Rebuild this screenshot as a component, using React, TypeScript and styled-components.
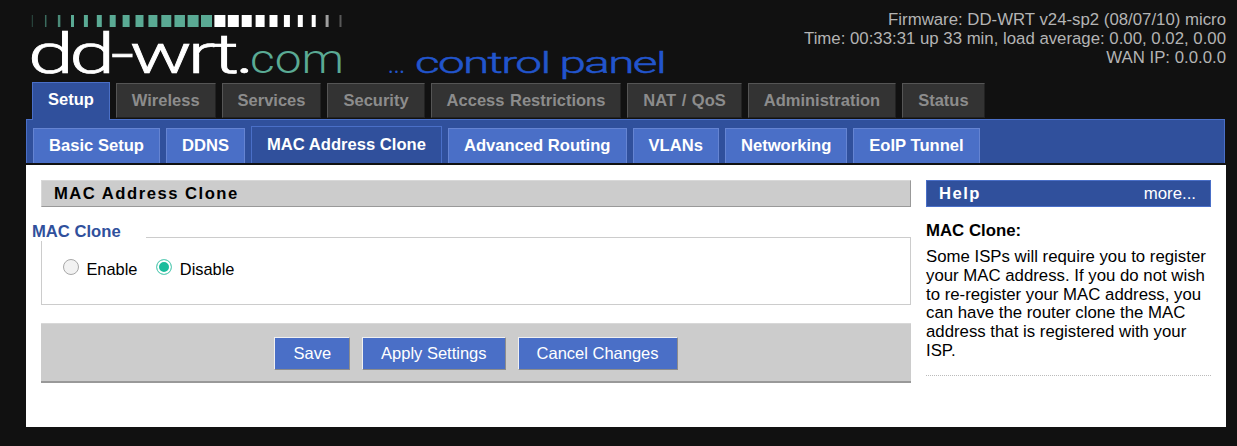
import { styled, createGlobalStyle } from "styled-components"

const GlobalStyle = createGlobalStyle`
  html, body {
    margin:0;
    padding:0;
    background:#111111;
    font-family:"Liberation Sans", Arial, sans-serif;
    font-size:16.4px;
  }
`
const Page = styled.div`
  width:1237px;
  height:446px;
  box-sizing:border-box;
  padding-right:11px;
  overflow:hidden;
`
const Header = styled.header`
  height:82px;
  display:flex;
  justify-content:space-between;
`
const LogoSvg = styled.svg`
  display:block;
  flex:none;
  width:680px;
  height:92px;
`
const Firmware = styled.div`
  padding-top:10px;
  text-align:right;
  font-size:16.8px;
  line-height:19px;
  color:#b4b4b4;
`
const Tabs = styled.nav`
  position:relative;
  display:flex;
  align-items:flex-start;
  gap:6px;
  height:37px;
  padding-left:32px;
`
const Tab = styled.div<{ $active?: boolean }>`
  box-sizing:border-box;
  display:flex;
  align-items:center;
  padding:0 15px;
  font-size:16.5px;
  font-weight:bold;
  word-spacing:1px;
  border:1px solid;
  ${({ $active }) => $active ? `
    position:relative;
    z-index:1;
    height:38px;
    padding-bottom:5px;
    color:#ffffff;
    background:#30509c;
    border-color:#4a6fc7;
    border-bottom:none;
  ` : `
    margin-top:1px;
    height:35px;
    color:#8c8c8c;
    background:#333333;
    border-color:#555555 #222222 #222222 #555555;
  `}
`
const SubBar = styled.div`
  box-sizing:border-box;
  display:flex;
  align-items:flex-end;
  gap:6px;
  height:44px;
  margin-left:26px;
  margin-right:1px;
  padding:0 6px;
  background:#30509c;
  border:1px solid #4a6fc7;
  border-bottom:none;
`
const SubTab = styled.div<{ $active?: boolean }>`
  box-sizing:border-box;
  display:flex;
  align-items:center;
  padding:0 15px;
  color:#ffffff;
  font-size:16.6px;
  font-weight:bold;
  border:1px solid;
  border-bottom:none;
  height:${({ $active }) => ($active ? "37px" : "35px")};
  background:${({ $active }) => ($active ? "#30509c" : "#4a6fc7")};
  border-color:${({ $active }) => ($active ? "#4a6fc7" : "#6584d2")};
`
const Main = styled.main`
  box-sizing:border-box;
  display:flex;
  gap:15px;
  height:262px;
  margin:2px 0 0 26px;
  padding:15px 15px 0;
  background:#ffffff;
  color:#000000;
`
const LeftColumn = styled.section`
  width:870px;
`
const SectionTitle = styled.h2`
  box-sizing:border-box;
  height:27px;
  margin:0;
  padding:0 12px;
  line-height:26px;
  font-size:16.64px;
  letter-spacing:1.5px;
  background:#cccccc;
  border-top:1px solid #d8d8d8;
  border-left:1px solid #d8d8d8;
  border-right:1px solid #999999;
  border-bottom:1px solid #999999;
`
const Fieldset = styled.div`
  position:relative;
  box-sizing:border-box;
  height:68px;
  margin-top:30px;
  padding:0 21px;
  border:1px solid #cccccc;
`
const Legend = styled.span`
  position:absolute;
  top:-16px;
  left:-10px;
  padding-right:25px;
  line-height:19px;
  font-size:16.64px;
  font-weight:bold;
  color:#30509c;
  background:#ffffff;
`
const RadioRow = styled.div`
  display:flex;
  align-items:center;
  gap:19px;
  margin-top:22px;
`
const RadioLabel = styled.label`
  display:flex;
  align-items:center;
  gap:7.4px;
  line-height:18px;
`
const Radio = styled.input`
  appearance:none;
  box-sizing:border-box;
  width:16px;
  height:16px;
  margin:-4px 0 0;
  border-radius:50%;
  border:1px solid #a8a8a8;
  background:#f2f2f2;
  &:checked {
    border-color:#6ad0bb;
    background:#1abc9c;
    box-shadow:inset 0 0 0 2px #ffffff;
  }
`
const ButtonBar = styled.div`
  box-sizing:border-box;
  display:flex;
  justify-content:center;
  align-items:center;
  gap:12px;
  height:60px;
  margin-top:18px;
  padding-top:1px;
  background:#cccccc;
  border-top:1px solid #d8d8d8;
  border-bottom:2px solid #999999;
`
const ActionButton = styled.button`
  box-sizing:border-box;
  height:33px;
  padding:0 18px;
  font-family:inherit;
  font-size:16.5px;
  color:#ffffff;
  background:#4a6fc7;
  border:1px solid;
  border-color:#f0f0f0 #8c8c8c #8c8c8c #f0f0f0;
`
const HelpColumn = styled.aside`
  width:285px;
`
const HelpTitle = styled.div`
  box-sizing:border-box;
  display:flex;
  justify-content:space-between;
  align-items:center;
  height:27px;
  padding:0 14px 0 12px;
  color:#ffffff;
  background:#30509c;
  border:1px solid #4a6fc7;
`
const HelpHeading = styled.span`
  font-size:16.64px;
  font-weight:bold;
  letter-spacing:1.5px;
`
const HelpMore = styled.span`
  font-size:16.8px;
`
const HelpBody = styled.div`
  margin-top:15px;
  padding-bottom:14px;
  border-bottom:1px dotted #bbbbbb;
`
const HelpTerm = styled.div`
  font-size:16.8px;
  font-weight:bold;
  line-height:18px;
  margin-top:1px;
`
const HelpText = styled.p`
  margin:8px 0 0;
  font-size:16.8px;
  line-height:18.8px;
`

const logoBars = [
  1, 1.5, 2.5, 3, 4, 5, 6, 7, 8, 9, 10, 10.5, 11, 11,
  11, 11, 10, 9, 8, 6, 5, 4, 3, 2,
]
const barOpacity = (i: number) => {
  if (i < 3) return 0.4 + i * 0.2
  if (i === 22) return 0.6
  if (i === 23) return 0.3
  return 1
}

const Logo = () => (
  <LogoSvg viewBox="0 0 680 92">
    {logoBars.map((w, i) => (
      <rect
        key={i}
        x={32.3 + i * 13.4 - w / 2}
        y={15}
        width={w}
        height={12}
        fill={i < 14 ? "#5aaa94" : "#ffffff"}
        opacity={barOpacity(i)}
      />
    ))}
    <text
      transform="translate(28 73) scale(1.47 1)"
      fontFamily="Roboto, sans-serif"
      fontSize={56}
      fontWeight={300}
      letterSpacing={-3}
      fill="#ffffff"
      stroke="#ffffff"
      strokeWidth={0.7}
    >
      dd-wrt.
    </text>
    <text
      x={250}
      y={73}
      fontFamily="Roboto, sans-serif"
      fontSize={40}
      fontWeight={300}
      textLength={94}
      lengthAdjust="spacingAndGlyphs"
      fill="#5aaa94"
    >
      com
    </text>
    <text
      x={388}
      y={73}
      fontFamily="Roboto, sans-serif"
      fontSize={24}
      textLength={17}
      lengthAdjust="spacingAndGlyphs"
      fill="#2255cc"
    >
      ...
    </text>
    <text
      x={415}
      y={73}
      fontFamily="Roboto, sans-serif"
      fontSize={30}
      fontWeight={300}
      letterSpacing={-1}
      textLength={250}
      lengthAdjust="spacingAndGlyphs"
      fill="#2255cc"
      stroke="#2255cc"
      strokeWidth={0.5}
    >
      control panel
    </text>
  </LogoSvg>
)

const mainTabs = ["Setup", "Wireless", "Services", "Security", "Access Restrictions", "NAT / QoS", "Administration", "Status"]
const subTabs = ["Basic Setup", "DDNS", "MAC Address Clone", "Advanced Routing", "VLANs", "Networking", "EoIP Tunnel"]

const App: React.FC = () => {
  return (
    <Page>
      <GlobalStyle />
      <Header>
        <Logo />
        <Firmware>
          Firmware: DD-WRT v24-sp2 (08/07/10) micro<br />
          Time: 00:33:31 up 33 min, load average: 0.00, 0.02, 0.00<br />
          WAN IP: 0.0.0.0
        </Firmware>
      </Header>
      <Tabs>
        {mainTabs.map((t) => (
          <Tab key={t} $active={t === "Setup"}>{t}</Tab>
        ))}
      </Tabs>
      <SubBar>
        {subTabs.map((t) => (
          <SubTab key={t} $active={t === "MAC Address Clone"}>{t}</SubTab>
        ))}
      </SubBar>
      <Main>
        <LeftColumn>
          <SectionTitle>MAC Address Clone</SectionTitle>
          <Fieldset>
            <Legend>MAC Clone</Legend>
            <RadioRow>
              <RadioLabel>
                <Radio type="radio" name="mac_clone" />
                Enable
              </RadioLabel>
              <RadioLabel>
                <Radio type="radio" name="mac_clone" defaultChecked />
                Disable
              </RadioLabel>
            </RadioRow>
          </Fieldset>
          <ButtonBar>
            <ActionButton>Save</ActionButton>
            <ActionButton>Apply Settings</ActionButton>
            <ActionButton>Cancel Changes</ActionButton>
          </ButtonBar>
        </LeftColumn>
        <HelpColumn>
          <HelpTitle>
            <HelpHeading>Help</HelpHeading>
            <HelpMore>more...</HelpMore>
          </HelpTitle>
          <HelpBody>
            <HelpTerm>MAC Clone:</HelpTerm>
            <HelpText>
              Some ISPs will require you to register your MAC address. If you do not wish to re-register your MAC address, you can have the router clone the MAC address that is registered with your ISP.
            </HelpText>
          </HelpBody>
        </HelpColumn>
      </Main>
    </Page>
  )
}
export default App
